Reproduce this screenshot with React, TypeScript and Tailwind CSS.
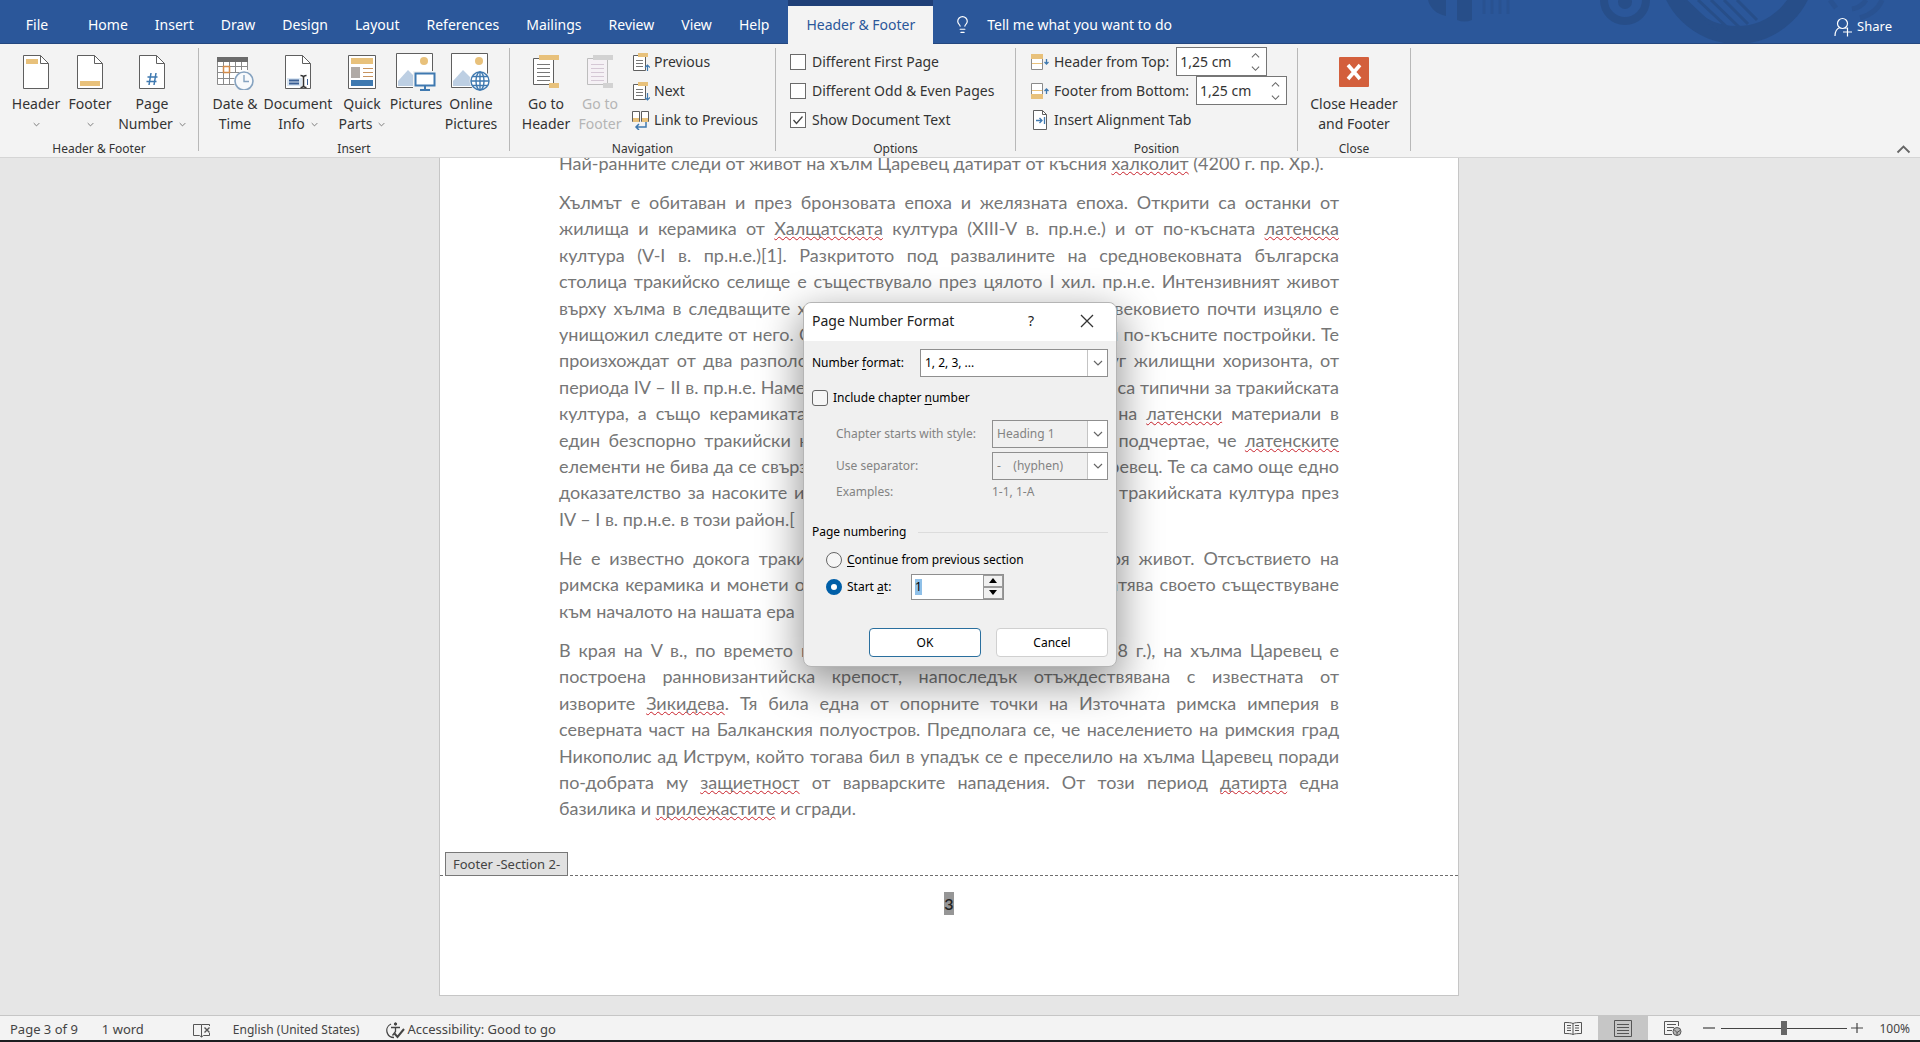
import React from 'react';
import { Lightbulb } from 'lucide-react';

const INK = '#5f5f5f';
const GOLD = '#e8c17b';
const BLUE = '#3f79b0';

/* ---------- ribbon icons ---------- */

function Sheet({ children }: { children?: React.ReactNode }) {
  return (
    <svg width="26" height="36" viewBox="0 0 26 36" fill="none" aria-hidden="true">
      <path d="M.5 1.5h17l8 8v25H.5z" fill="#fff" stroke={INK} />
      <path d="M17.5 1.5v8h8" stroke={INK} />
      {children}
    </svg>
  );
}

const HeaderIcon = () => (
  <Sheet>
    <rect x="3" y="5" width="12" height="5" fill={GOLD} />
  </Sheet>
);

const FooterIcon = () => (
  <Sheet>
    <rect x="3" y="27" width="20" height="5" fill={GOLD} />
  </Sheet>
);

const PageNumberIcon = () => (
  <Sheet>
    <path d="M12 19l-2 12M17 19l-2 12M8.500 23h10M7.500 27.500h10" stroke={BLUE} strokeWidth="1.500" />
  </Sheet>
);

const DateTimeIcon = () => (
  <svg width="38" height="36" viewBox="0 0 38 36" fill="none" aria-hidden="true">
    <path d="M1.500 3.500h30v28h-30z" fill="#fff" />
    <path d="M1.500 7v23.500h17M31.500 7v9M1.500 12.500h30M1.500 18.500h22M1.500 24.500h17M7.500 8v22M13.500 8v22M19.500 8v10M25.500 8v8" stroke="#8a8a8a" />
    <rect x="1" y="3" width="31" height="5" fill="#6b6b6b" />
    <rect x="7.500" y="12.500" width="6" height="6" stroke="#d38b4a" strokeWidth="1.500" />
    <circle cx="28" cy="27" r="9" fill="#f8fafc" stroke="#86a3c0" strokeWidth="1.600" />
    <path d="M28 21v6.500h5" stroke="#86a3c0" strokeWidth="1.400" />
  </svg>
);

const DocumentInfoIcon = () => (
  <Sheet>
    <rect x="2" y="24" width="15" height="8" fill="#dbe7f3" />
    <path d="M4 26.500h10M4 29.500h10" stroke="#3a5f94" strokeWidth="2" />
    <path d="M15.500 21.500c2 0 3 .5 3 2v8c0 1.500-1 2-3 2M21.500 21.500c-2 0-3 .5-3 2v8c0 1.500 1 2 3 2" stroke="#333" strokeWidth="1.500" />
    <path d="M22.500 25v6" stroke="#3a5f94" />
  </Sheet>
);

const QuickPartsIcon = () => (
  <svg width="28" height="36" viewBox="0 0 28 36" fill="none" aria-hidden="true">
    <path d="M.5 1.500h27v33H.5z" fill="#fff" stroke={INK} />
    <rect x="3" y="4" width="22" height="6" fill={GOLD} />
    <rect x="3" y="13" width="9" height="11" fill="#b0aaa6" />
    <path d="M15 14.500h10M15 18.500h10M15 22.500h10" stroke="#c7935e" />
    <rect x="3" y="26" width="22" height="6" fill={BLUE} />
  </svg>
);

const PictureBase = () => (
  <>
    <path d="M.5 1.500h36v34H.5z" fill="#fff" stroke={INK} />
    <circle cx="28" cy="9" r="4" fill={GOLD} />
    <path d="M2 34V29l10-11 8 8v8z" fill="#bdcfe3" />
  </>
);

const PicturesIcon = () => (
  <svg width="40" height="40" viewBox="0 0 40 40" fill="none" aria-hidden="true">
    <PictureBase />
    <rect x="17" y="19" width="23" height="20" fill="#f3f3f3" />
    <rect x="19.500" y="21.500" width="19" height="12" fill="#fff" stroke={BLUE} strokeWidth="2" />
    <path d="M29 34v3M24 38h10" stroke={BLUE} strokeWidth="2" />
  </svg>
);

const OnlinePicturesIcon = () => (
  <svg width="40" height="40" viewBox="0 0 40 40" fill="none" aria-hidden="true">
    <PictureBase />
    <circle cx="29" cy="29" r="10.500" fill="#f3f3f3" />
    <g stroke={BLUE} strokeWidth="1.400">
      <circle cx="29" cy="29" r="9" fill="#fff" />
      <ellipse cx="29" cy="29" rx="4" ry="9" />
      <path d="M29 20v18M20 29h18M21.500 24.500h15M21.500 33.500h15" />
    </g>
  </svg>
);

function GoToIcon({ muted }: { muted?: boolean }) {
  const line = muted ? '#bdbdbd' : INK;
  const band = muted ? '#d2d2d2' : GOLD;
  return (
    <svg width="28" height="36" viewBox="0 0 28 36" fill="none" aria-hidden="true">
      <path d="M1.500 4.500h20v26h-20z" fill={muted ? '#f5f1f5' : '#fff'} stroke={line} />
      <path d="M5 10.500h13M5 14.500h13M5 18.500h13M5 22.500h13M5 26.500h13" stroke={muted ? '#d5c8d5' : '#777'} />
      <rect x="7" y="1" width="20" height="5" fill={band} />
      <rect x="17" y="29" width="10" height="5" fill={band} />
    </svg>
  );
}

function StepIcon({ down }: { down?: boolean }) {
  return (
    <svg width="18" height="20" viewBox="0 0 18 20" fill="none" aria-hidden="true">
      <path d="M1.500 3.500h12v15h-12z" fill="#fff" stroke={INK} />
      <path d="M4 8.500h7M4 11.500h7M4 14.500h7" stroke="#777" />
      <rect x="6" y="1" width="10" height="4" fill={GOLD} />
      {down ? (
        <path d="M15.500 12v7M13 16.500l2.500 2.500 2.500-2.500" stroke={BLUE} strokeWidth="1.200" />
      ) : (
        <path d="M15.500 19v-6M13 15.500l2.500-2.500 2.500 2.500" stroke={BLUE} strokeWidth="1.200" />
      )}
    </svg>
  );
}

const LinkPreviousIcon = () => (
  <svg width="18" height="20" viewBox="0 0 18 20" fill="none" aria-hidden="true">
    <path d="M.5 1.500h7v10h-7zM9.500 1.500h7v10h-7z" fill="#fff" stroke={INK} />
    <path d="M1 8h6v4H1zM10 8h6v4h-6z" fill={GOLD} />
    <path d="M14 12v5H4M7 14l-3 3 3 3" stroke={BLUE} strokeWidth="1.500" />
  </svg>
);

function EdgeIcon({ bottom }: { bottom?: boolean }) {
  return (
    <svg width="19" height="18" viewBox="0 0 19 18" fill="none" aria-hidden="true">
      <path d="M.5 1.500h11v15H.5z" fill="#fff" stroke="#8a8a8a" />
      {bottom ? (
        <>
          <rect x="0" y="12" width="12" height="5" fill={GOLD} />
          <path d="M1 8.500h10" stroke={GOLD} />
          <path d="M15.500 12V7M13.500 9l2-2 2 2" stroke={BLUE} strokeWidth="1.300" />
        </>
      ) : (
        <>
          <rect x="0" y="1" width="12" height="5" fill={GOLD} />
          <path d="M1 10.500h10" stroke={GOLD} />
          <path d="M15.500 6v5M13.500 9l2 2 2-2" stroke={BLUE} strokeWidth="1.300" />
        </>
      )}
    </svg>
  );
}

const AlignmentTabIcon = () => (
  <svg width="19" height="20" viewBox="0 0 19 20" fill="none" aria-hidden="true">
    <path d="M2.500.5h9l4 4v15h-13z" fill="#fff" stroke={INK} />
    <path d="M11.500.5v4h4" stroke={INK} />
    <path d="M5 10.500h6M8.500 8l2.500 2.500L8.500 13M13.500 7v7" stroke={BLUE} strokeWidth="1.300" />
  </svg>
);

function Chevron({ up, className, size = 10 }: { up?: boolean; className?: string; size?: number }) {
  return (
    <svg width={size} height={size} viewBox="0 0 10 10" fill="none" className={className} aria-hidden="true">
      <path d={up ? 'M1 7l4-4 4 4' : 'M1 3l4 4 4-4'} stroke="#666" strokeWidth="1.200" />
    </svg>
  );
}

/* ---------- title bar ---------- */

const tabs = ['Home', 'Insert', 'Draw', 'Design', 'Layout', 'References', 'Mailings', 'Review', 'View', 'Help'];

function TitleBar() {
  return (
    <header className="relative flex h-11 items-stretch border-b border-[#24477f] bg-[#2b579a] text-white">
      <svg className="absolute right-0 top-0" width="520" height="43" viewBox="0 0 520 43" fill="none" aria-hidden="true">
        <g fill="#274e89">
          <path d="M28 0h18v16c-10-2-16-8-18-16zM57 0h15v20c-5 2-10 2-15 0z" />
        </g>
        <g stroke="#295291" strokeWidth="3">
          <path d="M84 0v14M92 0v14M100 0v14M108 0v14" />
        </g>
        <circle cx="225" cy="0" r="21" stroke="#274e89" strokeWidth="8" />
        <circle cx="225" cy="2" r="7" fill="#274e89" />
        <circle cx="337" cy="-35" r="70" stroke="#274e89" strokeWidth="18" />
        <path d="M285 0l32 30M298 0l30 28M311 0l28 27M324 0l24 24M337 0l20 20" stroke="#274e89" strokeWidth="3" />
        <path d="M482 0c-4 10-12 15-22 18M466 0c-3 5-7 8-14 9M430 0l6 8" stroke="#295291" strokeWidth="5" />
      </svg>
      <nav className="relative flex gap-px text-sm" aria-label="Ribbon tabs">
        <button className="w-[74px] pt-1.5 text-center">File</button>
        {tabs.map((t) => (
          <button key={t} className="px-[13px] pt-1.5">
            {t}
          </button>
        ))}
        <div className="-mb-px ml-[5px] flex flex-col bg-[#1f3f77] pt-1.5">
          <button className="flex-1 bg-[#f3f3f3] px-[18px] text-[#2b579a]">Header &amp; Footer</button>
        </div>
        <button className="ml-[19px] flex items-center gap-[15px] pt-1.5">
          <Lightbulb size={19} strokeWidth={1.5} />
          Tell me what you want to do
        </button>
      </nav>
      <button className="relative ml-auto mr-7 flex items-center gap-1 pt-2.5 text-[13px]">
        <svg width="19" height="20" viewBox="0 0 19 20" fill="none" stroke="#fff" strokeWidth="1.200" aria-hidden="true">
          <circle cx="8.500" cy="6.500" r="5" />
          <path d="M1 19c0-5 2-7.500 5-8.500M11 10.500l1.500 1M13.500 10.500v9M9 15h9" />
        </svg>
        Share
      </button>
    </header>
  );
}

/* ---------- ribbon ---------- */

function Group({ title, className, children }: { title: string; className: string; children: React.ReactNode }) {
  return (
    <>
      <section className={`flex shrink-0 flex-col ${className}`} aria-label={title}>
        <div className="flex flex-1">{children}</div>
        <h2 className="h-4 text-center text-[12px] leading-4 text-[#333]">{title}</h2>
      </section>
      <div className="mb-1.5 mt-1 w-px shrink-0 bg-[#b8b8b8]" />
    </>
  );
}

interface BigProps {
  icon: React.ReactNode;
  lines: [string, string?];
  menu?: boolean;
  disabled?: boolean;
  className: string;
}

function BigButton({ icon, lines, menu, disabled, className }: BigProps) {
  return (
    <button
      disabled={disabled}
      className={`flex flex-col items-center pt-1.5 text-sm leading-5 text-[#333] disabled:text-[#b5b5b5] ${className}`}
    >
      <span className="flex h-11 items-center">{icon}</span>
      <span className="whitespace-nowrap">{lines[0]}</span>
      <span className="flex h-5 items-center gap-1.5 whitespace-nowrap">
        {lines[1]}
        {menu && <Chevron size={7} />}
      </span>
    </button>
  );
}

function SmallButton({ icon, children }: { icon: React.ReactNode; children: React.ReactNode }) {
  return (
    <button className="flex h-[29px] items-center gap-1 whitespace-nowrap">
      {icon}
      {children}
    </button>
  );
}

function RibbonCheck({ label, checked }: { label: string; checked?: boolean }) {
  return (
    <label className="flex h-[29px] items-center gap-1.5 whitespace-nowrap">
      <span className="relative flex">
        <input
          type="checkbox"
          defaultChecked={checked}
          className="peer size-4 appearance-none border border-[#6b6b6b] bg-white"
        />
        <svg className="pointer-events-none absolute inset-0 hidden peer-checked:block" width="16" height="16" viewBox="0 0 16 16" fill="none" aria-hidden="true">
          <path d="M3.500 8l3 3.500 6-7" stroke="#444" strokeWidth="1.300" />
        </svg>
      </span>
      {label}
    </label>
  );
}

function Distance({ icon, label }: { icon: React.ReactNode; label: string }) {
  return (
    <label className="flex h-[29px] items-center whitespace-nowrap">
      {icon}
      <span className="ml-1 mr-[7px]">{label}</span>
      <span className="flex h-[29px] w-[91px] items-center border border-[#767676] bg-white pl-[3px] pr-1.5">
        <input type="text" defaultValue="1,25 cm" className="w-0 flex-1 bg-transparent outline-none" />
        <span className="flex flex-col gap-1">
          <Chevron up size={9} />
          <Chevron size={9} />
        </span>
      </span>
    </label>
  );
}

function Ribbon() {
  return (
    <div className="flex h-[114px] border-b border-[#d5d5d5] bg-[#f3f3f3] text-sm text-[#333]">
      <Group title="Header &amp; Footer" className="w-[198px] px-[5px]">
        <BigButton icon={<HeaderIcon />} lines={['Header']} menu className="ml-1 w-[54px]" />
        <BigButton icon={<FooterIcon />} lines={['Footer']} menu className="w-[54px]" />
        <BigButton icon={<PageNumberIcon />} lines={['Page', 'Number']} menu className="w-[70px]" />
      </Group>
      <Group title="Insert" className="w-[310px] px-[9px]">
        <BigButton icon={<DateTimeIcon />} lines={['Date &', 'Time']} className="w-[54px]" />
        <BigButton icon={<DocumentInfoIcon />} lines={['Document', 'Info']} menu className="w-[72px]" />
        <BigButton icon={<QuickPartsIcon />} lines={['Quick', 'Parts']} menu className="w-[56px]" />
        <BigButton icon={<PicturesIcon />} lines={['Pictures']} className="w-[52px]" />
        <BigButton icon={<OnlinePicturesIcon />} lines={['Online', 'Pictures']} className="w-[58px]" />
      </Group>
      <Group title="Navigation" className="w-[265px] px-[9px]">
        <BigButton icon={<GoToIcon />} lines={['Go to', 'Header']} className="w-[54px]" />
        <BigButton icon={<GoToIcon muted />} lines={['Go to', 'Footer']} disabled className="w-[54px]" />
        <div className="ml-[5px] mt-[3px] flex flex-col">
          <SmallButton icon={<StepIcon />}>Previous</SmallButton>
          <SmallButton icon={<StepIcon down />}>Next</SmallButton>
          <SmallButton icon={<LinkPreviousIcon />}>Link to Previous</SmallButton>
        </div>
      </Group>
      <Group title="Options" className="w-[239px] px-3.5">
        <div className="mt-[3px] flex flex-col">
          <RibbonCheck label="Different First Page" />
          <RibbonCheck label="Different Odd &amp; Even Pages" />
          <RibbonCheck label="Show Document Text" checked />
        </div>
      </Group>
      <Group title="Position" className="w-[281px] px-[15px]">
        <div className="mt-[3px] flex flex-col">
          <Distance icon={<EdgeIcon />} label="Header from Top:" />
          <Distance icon={<EdgeIcon bottom />} label="Footer from Bottom:" />
          <SmallButton icon={<AlignmentTabIcon />}>Insert Alignment Tab</SmallButton>
        </div>
      </Group>
      <Group title="Close" className="w-[112px]">
        <BigButton
          icon={
            <svg width="30" height="30" viewBox="0 0 30 30" fill="none" aria-hidden="true">
              <rect width="30" height="30" rx="1" fill="#d35f3c" />
              <path d="M9 8l12 14M21 8L9 22" stroke="#fff" strokeWidth="3.600" />
            </svg>
          }
          lines={['Close Header', 'and Footer']}
          className="w-full"
        />
      </Group>
      <button className="ml-auto mr-[9px] self-end" aria-label="Collapse the ribbon">
        <Chevron up size={15} />
      </button>
    </div>
  );
}

/* ---------- document ---------- */

/* Words wrapped in underscores are flagged by the spelling checker. */
const paragraphs: string[][] = [
  ['Най-ранните следи от живот на хълм Царевец датират от късния _халколит_ (4200 г. пр. Хр.).'],
  [
    'Хълмът е обитаван и през бронзовата епоха и желязната епоха. Открити са останки от',
    'жилища и керамика от _Халщатската_ култура (XIII-V в. пр.н.е.) и от по-късната _латенска_',
    'култура (V-I в. пр.н.е.)[1]. Разкритото под развалините на средновековната българска',
    'столица тракийско селище е съществувало през цялото I хил. пр.н.е. Интензивният живот',
    'върху хълма в следващите хилядолетия и особено през Средновековието почти изцяло е',
    'унищожил следите от него. Останките му са били разрушени при по-късните постройки. Те',
    'произхождат от два разположени непосредствено един над друг жилищни хоризонта, от',
    'периода IV – II в. пр.н.е. Намерените в тях керамични съдове и др. са типични за тракийската',
    'култура, а също керамиката на колело и сива. Наличието тук на _латенски_ материали в',
    'един безспорно тракийски културен пласт, което трябва да се подчертае, че _латенските_',
    'елементи не бива да се свързват с келтско население на хълм Царевец. Те са само още едно',
    'доказателство за насоките и културните взаимодействия между тракийската култура през',
    'IV – I в. пр.н.е. в този район.[',
  ],
  [
    'Не е известно докога тракийското селище тук продължава своя живот. Отсъствието на',
    'римска керамика и монети от това време показва, че то е прекратява своето съществуване',
    'към началото на нашата ера',
  ],
  [
    'В края на V в., по времето на император Анастасий I (491 – 518 г.), на хълма Царевец е',
    'построена ранновизантийска крепост, напоследък отъждествявана с известната от',
    'изворите _Зикидева_. Тя била една от опорните точки на Източната римска империя в',
    'северната част на Балканския полуостров. Предполага се, че населението на римския град',
    'Никополис ад Иструм, който тогава бил в упадък се е преселило на хълма Царевец поради',
    'по-добрата му _защиетност_ от варварските нападения. От този период _датирта_ една',
    'базилика и _прилежастите_ и сгради.',
  ],
];

function Line({ text, last }: { text: string; last: boolean }) {
  return (
    <span className={last ? 'whitespace-nowrap' : 'whitespace-nowrap [text-align-last:justify]'}>
      {text.split('_').map((part, i) =>
        i % 2 ? (
          <span
            key={i}
            className="underline decoration-[#c8202a] decoration-wavy decoration-1 underline-offset-1 [text-decoration-skip-ink:none]"
          >
            {part}
          </span>
        ) : (
          part
        ),
      )}
    </span>
  );
}

function DocumentArea() {
  return (
    <main className="flex-1 overflow-hidden bg-[#e6e6e6] pr-[22px]">
      <article className="mx-auto -mt-2 flex w-[1020px] flex-col border-x border-b border-[#c6c6c6] bg-white">
        <div className="flex flex-col gap-[13px] px-[119px] font-[Lato,'Open_Sans',sans-serif] text-[18px] text-[#767676]">
          {paragraphs.map((lines, p) => (
            <p key={p} className="grid auto-rows-[26px_27px_26px_27px_26px] grid-cols-1 items-center">
              {lines.map((line, i) => (
                <Line key={i} text={line} last={i === lines.length - 1} />
              ))}
            </p>
          ))}
        </div>
        <div className="mt-[30px] flex border-b border-dashed border-[#6e6e6e]">
          <span className="-mb-px ml-[5px] border border-[#777] bg-[#e1e1e1] px-[7px] text-[13px] leading-[22px] text-[#444]">
            Footer -Section 2-
          </span>
        </div>
        <footer className="flex h-[119px] justify-center pt-4 text-base font-semibold leading-[23px] text-[#222]">
          <span className="h-[23px] bg-[#969696] font-[Lato,'Open_Sans',sans-serif]">3</span>
        </footer>
      </article>
    </main>
  );
}

/* ---------- dialog ---------- */

interface ComboProps {
  id: string;
  value: string;
  disabled?: boolean;
  className: string;
}

function Combo({ id, value, disabled, className }: ComboProps) {
  return (
    <span className={`relative flex h-7 ${className}`}>
      <select
        id={id}
        disabled={disabled}
        defaultValue={value}
        className="w-full appearance-none border border-[#8f8f8f] bg-white pl-1 text-black opacity-100 disabled:bg-[#f0f0f0] disabled:text-[#838383]"
      >
        <option>{value}</option>
      </select>
      <span className="pointer-events-none absolute inset-y-px right-px flex w-5 items-center justify-center border-l border-[#c4c4c4] bg-white">
        <Chevron />
      </span>
    </span>
  );
}

function PageNumberDialog() {
  return (
    <div
      role="dialog"
      aria-label="Page Number Format"
      className="absolute left-1/2 top-[302px] w-[314px] -translate-x-1/2 rounded-lg border border-[#b5b5b5] bg-[#f0f0f0] text-[12px] leading-4 text-black shadow-[0_14px_40px_4px_rgba(0,0,0,0.4)]"
    >
      <div className="flex h-[38px] items-center rounded-t-lg bg-white pb-[3px] pl-2 pr-[22px] text-sm text-[#222]">
        <h1>Page Number Format</h1>
        <button className="ml-auto" aria-label="Help">?</button>
        <button className="ml-[46px]" aria-label="Close">
          <svg width="14" height="14" viewBox="0 0 14 14" fill="none" aria-hidden="true">
            <path d="M1 1l12 12M13 1L1 13" stroke="#333" strokeWidth="1.300" />
          </svg>
        </button>
      </div>
      <form className="flex flex-col px-2 pb-[9px] pt-2" onSubmit={(e) => e.preventDefault()}>
        <div className="flex items-center justify-between">
          <label htmlFor="format">
            Number <u className="underline-offset-2">f</u>ormat:
          </label>
          <Combo id="format" value="1, 2, 3, ..." className="w-[188px]" />
        </div>
        <label className="mt-[13px] flex h-4 items-center gap-[5px]">
          <input type="checkbox" className="size-4 appearance-none rounded-[3px] border border-[#666] bg-[#f6f6f6]" />
          <span>
            Include chapter <u className="underline-offset-2">n</u>umber
          </span>
        </label>
        <div className="mt-3.5 flex flex-col gap-1 pl-6 text-[#838383]">
          <div className="flex items-center justify-between">
            <label htmlFor="style">Chapter starts with style:</label>
            <Combo id="style" value="Heading 1" disabled className="w-[116px]" />
          </div>
          <div className="flex items-center justify-between">
            <label htmlFor="separator">Use separator:</label>
            <Combo id="separator" value={'-\u00a0\u00a0\u00a0\u00a0(hyphen)'} disabled className="w-[116px]" />
          </div>
          <div className="flex justify-between">
            <span>Examples:</span>
            <output className="w-[116px]">1-1, 1-A</output>
          </div>
        </div>
        <fieldset className="mt-6 flex flex-col">
          <legend className="contents">
            <span className="flex items-center gap-3 after:h-px after:flex-1 after:bg-[#dcdcdc]">Page numbering</span>
          </legend>
          <label className="mt-3 flex h-4 items-center gap-[5px] pl-3.5">
            <input type="radio" name="numbering" className="size-4 appearance-none rounded-full border border-[#666] bg-[#f6f6f6]" />
            <span>
              <u className="underline-offset-2">C</u>ontinue from previous section
            </span>
          </label>
          <div className="mt-[5px] flex h-[27px] items-center pl-3.5">
            <label className="flex w-[85px] items-center gap-[5px]">
              <input
                type="radio"
                name="numbering"
                defaultChecked
                className="size-4 appearance-none rounded-full border-[5px] border-[#005fa8] bg-white"
              />
              <span>
                Start <u className="underline-offset-2">a</u>t:
              </span>
            </label>
            <span className="flex h-[26px] w-[93px] items-stretch border border-[#8f8f8f] bg-white">
              <span className="flex flex-1 items-center pl-[3px]">
                <input
                  type="text"
                  defaultValue="1"
                  aria-label="Start at"
                  className="h-4 w-[7px] bg-[#8fc0e8] outline-none"
                />
              </span>
              <span className="flex w-5 flex-col">
                <button type="button" aria-label="Increase" className="flex flex-1 items-center justify-center border border-[#9a9a9a] bg-[#f0f0f0]">
                  <svg width="8" height="5" viewBox="0 0 8 5" aria-hidden="true"><path d="M0 5l4-5 4 5z" /></svg>
                </button>
                <button type="button" aria-label="Decrease" className="flex flex-1 items-center justify-center border border-[#9a9a9a] bg-[#f0f0f0]">
                  <svg width="8" height="5" viewBox="0 0 8 5" aria-hidden="true"><path d="M0 0l4 5 4-5z" /></svg>
                </button>
              </span>
            </span>
          </div>
        </fieldset>
        <div className="mt-7 flex justify-end gap-[15px]">
          <button className="h-[29px] w-[112px] rounded border border-[#2a6f9e] bg-white">OK</button>
          <button type="button" className="h-[29px] w-[112px] rounded border border-[#d0d0d0] bg-white">Cancel</button>
        </div>
      </form>
    </div>
  );
}

/* ---------- status bar ---------- */

function StatusBar() {
  return (
    <div className="flex h-[27px] items-stretch border-b-2 border-t border-b-[#1c1c1f] border-t-[#c6c6c6] bg-[#f3f3f3] px-2.5 text-[12px] text-[#444]">
      <div className="flex items-center pt-1 text-[13px]">
        <button>Page 3 of 9</button>
        <button className="ml-6">1 word</button>
        <button className="ml-[49px]" aria-label="Proofing errors">
          <svg width="18" height="16" viewBox="0 0 18 16" fill="none" stroke="#555" aria-hidden="true">
            <path d="M8.500 2.500h-8v11h6l2 1.500 2-1.500h6V11M8.500 2.500V15M8.500 2.500h8V4" />
            <path d="M11.500 5.500l5 5M16.500 5.500l-5 5" strokeWidth="1.400" />
          </svg>
        </button>
        <button className="ml-[22px] text-[12px]">English (United States)</button>
        <button className="ml-[27px] flex items-center gap-0.5">
          <svg width="19" height="17" viewBox="0 0 19 17" fill="none" stroke="#444" aria-hidden="true">
            <path d="M5 2C1 4 0 8 1.500 11.500 2.500 14 5 15.500 8 15.500" strokeWidth="1.300" />
            <circle cx="9.500" cy="2" r="1.200" fill="#444" />
            <path d="M5 5.500h9M9.500 5.500v4l-3 4" strokeWidth="1.300" />
            <path d="M8.500 11.500l3 3.500 6.500-8" strokeWidth="2" />
          </svg>
          Accessibility: Good to go
        </button>
      </div>
      <div className="ml-auto flex h-full items-center">
        <button className="mr-4" aria-label="Read mode">
          <svg width="18" height="15" viewBox="0 0 18 15" fill="none" stroke="#555" aria-hidden="true">
            <path d="M9 2.500C7 1.500 4 1.500.5 1.500v11c3.500 0 6.500 0 8.500 1 2-1 5-1 8.500-1v-11c-3.500 0-6.500 0-8.500 1zM9 2.500v11M3 4.500h4M3 7h4M3 9.500h4M11 4.500h4M11 7h4M11 9.500h4" />
          </svg>
        </button>
        <button className="flex h-full w-[50px] items-center justify-center bg-[#c6c6c6]" aria-label="Print layout">
          <svg width="18" height="17" viewBox="0 0 18 17" fill="none" stroke="#555" aria-hidden="true">
            <path d="M.5.5h17v16H.5zM3 4.500h12M3 7.500h12M3 10.500h12M3 13.500h12" />
          </svg>
        </button>
        <button className="ml-4" aria-label="Web layout">
          <svg width="19" height="17" viewBox="0 0 19 17" fill="none" stroke="#555" aria-hidden="true">
            <path d="M8 14.500H.5v-13h14V6M3 4.500h9M3 7.500h7M3 10.500h5" />
            <circle cx="13" cy="11.500" r="4" fill="#b5b5b5" />
            <path d="M10 9.500l3 3 3-2M13 12v3.500" />
          </svg>
        </button>
        <button className="ml-5" aria-label="Zoom out">
          <svg width="12" height="12" viewBox="0 0 12 12" aria-hidden="true"><path d="M0 6h12" stroke="#444" strokeWidth="1.200" /></svg>
        </button>
        <input
          type="range"
          aria-label="Zoom"
          defaultValue="50"
          className="ml-1.5 h-3.5 w-[126px] appearance-none bg-[linear-gradient(#444,#444)] bg-[length:100%_1px] bg-center bg-no-repeat [&::-webkit-slider-thumb]:h-3.5 [&::-webkit-slider-thumb]:w-1.5 [&::-webkit-slider-thumb]:appearance-none [&::-webkit-slider-thumb]:bg-[#666]"
        />
        <button className="ml-1" aria-label="Zoom in">
          <svg width="12" height="12" viewBox="0 0 12 12" aria-hidden="true"><path d="M0 6h12M6 1v10" stroke="#444" strokeWidth="1.200" /></svg>
        </button>
        <button className="ml-4 pt-0.5">100%</button>
      </div>
    </div>
  );
}

export default function App() {
  return (
    <div className="relative flex h-screen flex-col overflow-hidden font-['Noto_Sans','Open_Sans',sans-serif]">
      <TitleBar />
      <Ribbon />
      <DocumentArea />
      <StatusBar />
      <PageNumberDialog />
    </div>
  );
}
